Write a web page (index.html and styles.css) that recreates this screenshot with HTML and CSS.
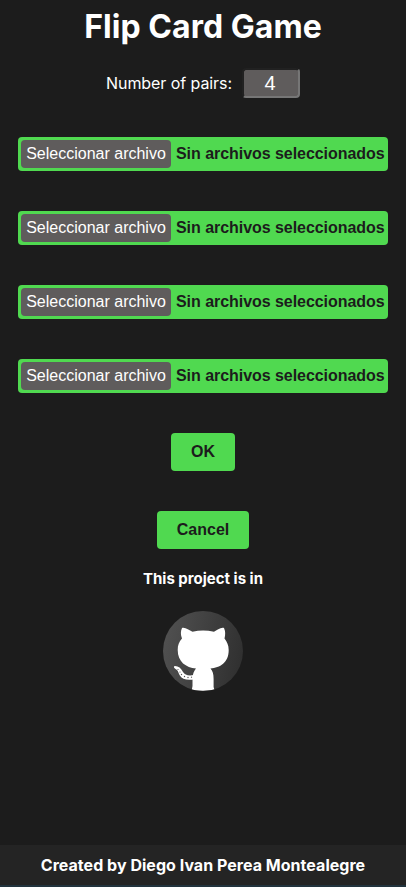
FILE: index.html
```html
<!DOCTYPE html>
<html lang="en">
<head>
<meta charset="utf-8">
<title>Flip Card Game</title>
<link rel="stylesheet" href="styles.css">
</head>
<body>
<main>
  <h1>Flip Card Game</h1>
  <div class="pairs"><label for="pairs">Number of pairs:</label><input id="pairs" type="text" value="4"></div>
  <div class="files">
    <div class="file"><span class="choose">Seleccionar archivo</span><span class="status">Sin archivos seleccionados</span></div>
    <div class="file"><span class="choose">Seleccionar archivo</span><span class="status">Sin archivos seleccionados</span></div>
    <div class="file"><span class="choose">Seleccionar archivo</span><span class="status">Sin archivos seleccionados</span></div>
    <div class="file"><span class="choose">Seleccionar archivo</span><span class="status">Sin archivos seleccionados</span></div>
    <button>OK</button>
    <button>Cancel</button>
  </div>
  <p class="project">This project is in</p>
  <svg class="logo" viewBox="0 0 80 80" width="80" height="80">
    <defs>
      <linearGradient id="disc" x1="0" y1="0.4" x2="1" y2="0.6"><stop offset="0" stop-color="#505050"/><stop offset="1" stop-color="#303030"/></linearGradient>
      <clipPath id="round"><circle cx="40" cy="40" r="40"/></clipPath>
    </defs>
    <circle cx="40" cy="40" r="40" fill="url(#disc)"/>
    <g clip-path="url(#round)" fill="#fff">
      <path d="M19 17C22 16 26 19 29.500 20.800Q40 18 51 20.800C54 19 58 16 61 17C62.500 20 62.500 24 61.500 27.500C64 31 65.700 34 65.700 39C65.700 52 57 56.500 47.500 57.500C49.700 60 50.600 63 50.600 68L50.600 76Q50.600 78.500 53 79.500L27.500 80Q29.500 78 29.500 75L29.500 68C29.500 63 31 60 33 57.500C23 56.500 14.700 51 14.700 39C14.700 34 16 31 19 27.500C17.500 24 17.500 20 19 17Z"/>
      <path d="M31 64C25 65 22 64 20 61C18 57 15.500 55 12 55C10.500 55 10.500 57 12.500 58C15 59 15 61 16.500 64C19 68.500 24 69.500 31 68.500Z"/>
      <g fill="#555"><circle cx="15" cy="58.500" r=".6"/><circle cx="17" cy="61" r=".6"/><circle cx="18.500" cy="63.500" r=".7"/><circle cx="21.500" cy="65.500" r=".7"/><circle cx="25" cy="66.500" r=".7"/><circle cx="28.500" cy="66.200" r=".6"/></g>
    </g>
  </svg>
</main>
<footer>Created by Diego Ivan Perea Montealegre</footer>
</body>
</html>
```
FILE: styles.css
```css
* { box-sizing: border-box; }
body {
  margin: 0;
  height: 887px;
  display: flex;
  flex-direction: column;
  background: #1c1c1c;
  color: #fff;
  font: 16px Inter, sans-serif;
  overflow: hidden;
}
main {
  flex: 1;
  display: flex;
  flex-direction: column;
  align-items: center;
  padding-top: 7px;
}
h1 { margin: 0; font-size: 32px; line-height: 39px; font-weight: 700; letter-spacing: .05px; }
.pairs { display: flex; align-items: center; margin-top: 22px; height: 30px; gap: 10px; }
.pairs label { letter-spacing: -.07px; }
.pairs input {
  width: 58px;
  height: 30px;
  padding: 0 2px 0 0;
  border: 2px solid;
  border-color: #212121 #767676 #767676 #212121;
  border-radius: 4px;
  background: #5f5c5c;
  color: #fff;
  font: 20px "Liberation Sans", Arial, sans-serif;
  text-align: center;
}
.files {
  display: flex;
  flex-direction: column;
  align-items: center;
  gap: 40px;
  margin-top: 39px;
}
.file, button {
  border-radius: 4px;
  background: #50d950;
  color: #1c1c1c;
  font: bold 16px "Liberation Sans", Arial, sans-serif;
}
.file {
  display: flex;
  align-items: center;
  gap: 5px;
  width: 370px;
  height: 34px;
  padding: 3px;
  white-space: nowrap;
}
.choose {
  flex: none;
  width: 150px;
  height: 28px;
  line-height: 27px;
  border-radius: 4px;
  background: #5f5c5c;
  color: #fff;
  font-weight: 400;
  text-align: center;
}
.status { letter-spacing: -.05px; }
button { height: 38px; padding: 0 20px; border: 0; }
.project { margin: 20px 0 0; font-size: 15px; line-height: 19px; font-weight: 700; }
.logo { margin-top: 23px; }
footer {
  height: 42px;
  line-height: 40px;
  border-bottom: 2px solid #22333d;
  background: #242424;
  font-weight: 700;
  letter-spacing: .03px;
  text-align: center;
}
```
